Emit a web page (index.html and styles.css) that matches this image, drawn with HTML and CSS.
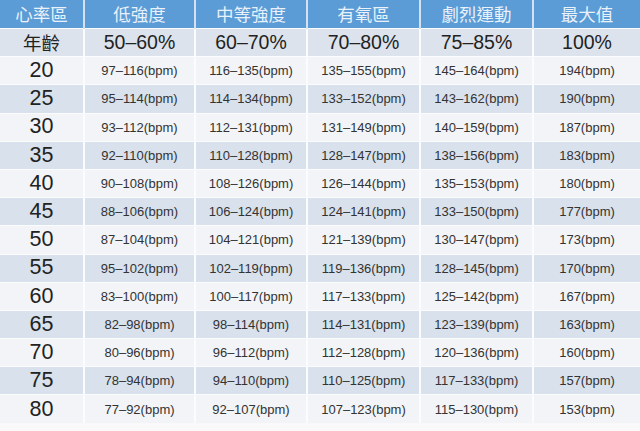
FILE: index.html
```html
<!DOCTYPE html>
<html lang="zh-Hant">
<head>
<meta charset="utf-8">
<title>心率區</title>
<link rel="stylesheet" href="styles.css">
</head>
<body>
<table class="hr">
<colgroup>
<col class="c1"><col class="c2"><col class="c3"><col class="c4"><col class="c5"><col class="c6">
</colgroup>
<thead>
<tr class="head"><th>心率區</th><th>低強度</th><th>中等強度</th><th>有氧區</th><th>劇烈運動</th><th>最大值</th></tr>
</thead>
<tbody>
<tr class="pct"><td class="age-label">年齡</td><td>50–60%</td><td>60–70%</td><td>70–80%</td><td>75–85%</td><td>100%</td></tr>
<tr class="odd"><td class="age">20</td><td>97–116(bpm)</td><td>116–135(bpm)</td><td>135–155(bpm)</td><td>145–164(bpm)</td><td>194(bpm)</td></tr>
<tr class="even"><td class="age">25</td><td>95–114(bpm)</td><td>114–134(bpm)</td><td>133–152(bpm)</td><td>143–162(bpm)</td><td>190(bpm)</td></tr>
<tr class="odd"><td class="age">30</td><td>93–112(bpm)</td><td>112–131(bpm)</td><td>131–149(bpm)</td><td>140–159(bpm)</td><td>187(bpm)</td></tr>
<tr class="even"><td class="age">35</td><td>92–110(bpm)</td><td>110–128(bpm)</td><td>128–147(bpm)</td><td>138–156(bpm)</td><td>183(bpm)</td></tr>
<tr class="odd"><td class="age">40</td><td>90–108(bpm)</td><td>108–126(bpm)</td><td>126–144(bpm)</td><td>135–153(bpm)</td><td>180(bpm)</td></tr>
<tr class="even"><td class="age">45</td><td>88–106(bpm)</td><td>106–124(bpm)</td><td>124–141(bpm)</td><td>133–150(bpm)</td><td>177(bpm)</td></tr>
<tr class="odd"><td class="age">50</td><td>87–104(bpm)</td><td>104–121(bpm)</td><td>121–139(bpm)</td><td>130–147(bpm)</td><td>173(bpm)</td></tr>
<tr class="even"><td class="age">55</td><td>95–102(bpm)</td><td>102–119(bpm)</td><td>119–136(bpm)</td><td>128–145(bpm)</td><td>170(bpm)</td></tr>
<tr class="odd"><td class="age">60</td><td>83–100(bpm)</td><td>100–117(bpm)</td><td>117–133(bpm)</td><td>125–142(bpm)</td><td>167(bpm)</td></tr>
<tr class="even"><td class="age">65</td><td>82–98(bpm)</td><td>98–114(bpm)</td><td>114–131(bpm)</td><td>123–139(bpm)</td><td>163(bpm)</td></tr>
<tr class="odd"><td class="age">70</td><td>80–96(bpm)</td><td>96–112(bpm)</td><td>112–128(bpm)</td><td>120–136(bpm)</td><td>160(bpm)</td></tr>
<tr class="even"><td class="age">75</td><td>78–94(bpm)</td><td>94–110(bpm)</td><td>110–125(bpm)</td><td>117–133(bpm)</td><td>157(bpm)</td></tr>
<tr class="odd"><td class="age">80</td><td>77–92(bpm)</td><td>92–107(bpm)</td><td>107–123(bpm)</td><td>115–130(bpm)</td><td>153(bpm)</td></tr>
</tbody>
</table>
</body>
</html>
```
FILE: styles.css
```css
html, body {
  margin: 0;
  padding: 0;
  background: #f9f9fa;
}
body {
  width: 640px;
  height: 431px;
  overflow: hidden;
  font-family: "Liberation Sans", "Noto Sans CJK TC", Arial, sans-serif;
  color: #2a2a2a;
}
.hr {
  width: 640px;
  height: 423px;
  table-layout: fixed;
  border-collapse: collapse;
}
.c1 { width: 84px; }
.c2 { width: 111px; }
.c3 { width: 112px; }
.c4 { width: 113px; }
.c5 { width: 113px; }
.c6 { width: 107px; }
.hr th, .hr td {
  padding: 0;
  line-height: 1;
  text-align: center;
  vertical-align: middle;
  border-left: 2px solid #fbfcfd;
  border-top: 1px solid #fbfcfd;
  white-space: nowrap;
  overflow: hidden;
}
.hr th:first-child, .hr td:first-child { border-left: 0; }
.head th {
  height: 28px;
  background: #5b9cd6;
  color: #e9f1fb;
  font-family: "Noto Sans CJK TC", sans-serif;
  font-weight: 400;
  font-size: 17.5px;
  border-top: 0;
  border-left: 2px solid #d3e1f0;
}
.head th:first-child { border-left: 0; }
.hr tbody tr { height: 28.2px; }
.pct td {
  background: #dde3ec;
  font-size: 19.5px;
  color: #222;
}
.pct .age-label {
  font-family: "Noto Sans CJK TC", sans-serif;
  font-size: 18.5px;
}
.odd td { background: #f2f4f7; }
.even td { background: #d8e1ec; }
.odd td, .even td {
  font-size: 13px;
  color: #333;
}
.hr td.age {
  font-size: 21.5px;
  color: #222;
}
```
